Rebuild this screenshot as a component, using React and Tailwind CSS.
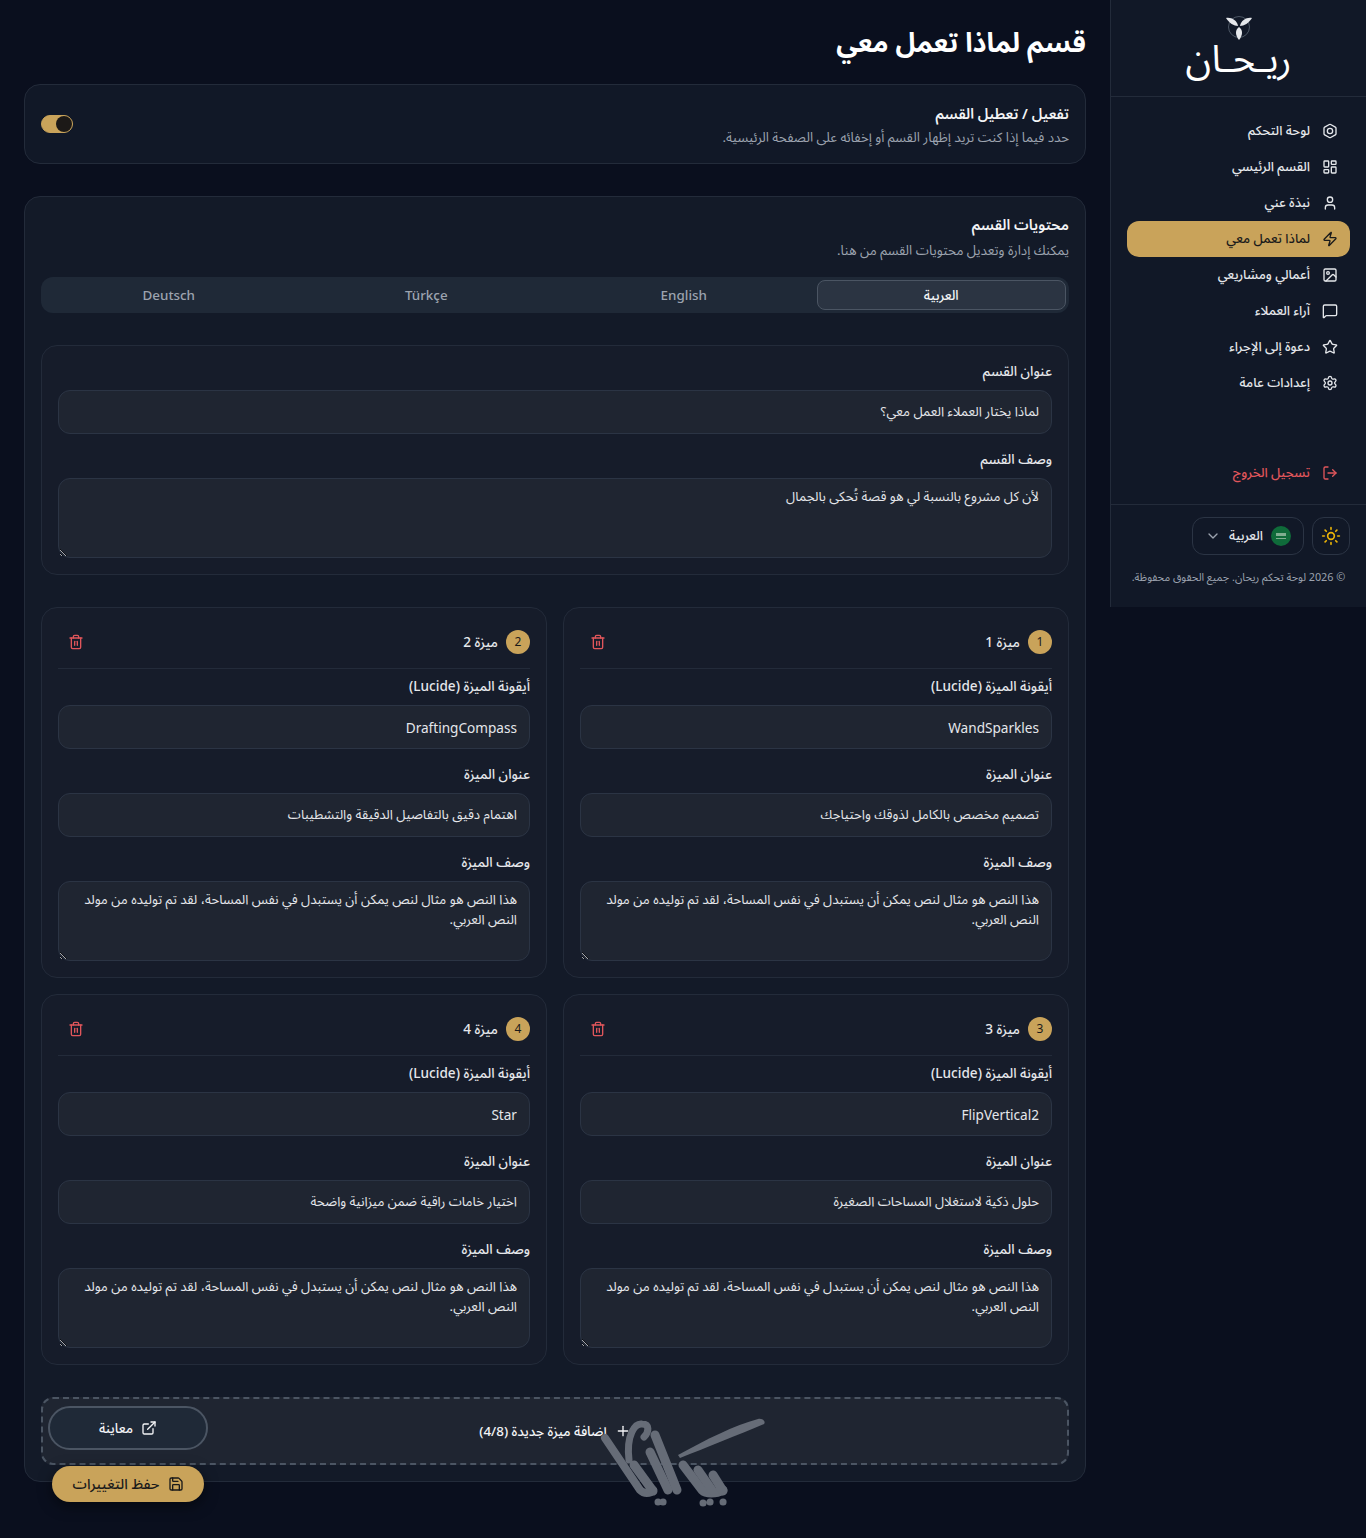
import { LayoutDashboard, User, Zap, Image, MessageSquare, Star, Settings, LogOut, Sun, ChevronDown, Trash2, Plus, ExternalLink, Save } from 'lucide-react';

const nav = [
  { label: 'لوحة التحكم', icon: 'hex' },
  { label: 'القسم الرئيسي', icon: LayoutDashboard },
  { label: 'نبذة عني', icon: User },
  { label: 'لماذا تعمل معي', icon: Zap, active: true },
  { label: 'أعمالي ومشاريعي', icon: Image },
  { label: 'آراء العملاء', icon: MessageSquare },
  { label: 'دعوة إلى الإجراء', icon: Star },
  { label: 'إعدادات عامة', icon: Settings },
];

const lorem = 'هذا النص هو مثال لنص يمكن أن يستبدل في نفس المساحة، لقد تم توليده من مولد النص العربي.';

const features = [
  { n: 1, icon: 'WandSparkles', title: 'تصميم مخصص بالكامل لذوقك واحتياجك' },
  { n: 2, icon: 'DraftingCompass', title: 'اهتمام دقيق بالتفاصيل الدقيقة والتشطيبات' },
  { n: 3, icon: 'FlipVertical2', title: 'حلول ذكية لاستغلال المساحات الصغيرة' },
  { n: 4, icon: 'Star', title: 'اختيار خامات راقية ضمن ميزانية واضحة' },
];

const HexIcon = ({ className }) => (
  <svg className={className} viewBox="0 0 24 24" fill="none" stroke="currentColor" strokeWidth="2" strokeLinecap="round" strokeLinejoin="round">
    <path d="M21 16V8a2 2 0 0 0-1-1.73l-7-4a2 2 0 0 0-2 0l-7 4A2 2 0 0 0 3 8v8a2 2 0 0 0 1 1.73l7 4a2 2 0 0 0 2 0l7-4A2 2 0 0 0 21 16z" />
    <circle cx="12" cy="12" r="4" />
  </svg>
);

const Logo = () => (
  <svg className="w-[28px] h-[26px]" viewBox="0 0 28 26" fill="none">
    <circle cx="14" cy="12" r="10.5" stroke="#4b5563" strokeWidth="1" />
    <path d="M13 11C9 11 4 8 1 3c5-1 11 2 12 8z" fill="#e5e7eb" />
    <path d="M15 11c4 0 9-3 12-8-5-1-11 2-12 8z" fill="#e5e7eb" />
    <path d="M14 12c-4 3-4 8 0 13 4-5 4-10 0-13z" fill="#e5e7eb" />
  </svg>
);

const Flag = () => (
  <div className="w-5 h-5 rounded-full bg-[#0f6b3a] flex flex-col items-center justify-center gap-[2px]">
    <div className="w-2.5 h-[3px] bg-[#7fae90]" />
    <div className="w-2.5 h-px bg-[#7fae90]" />
  </div>
);

const Label = ({ children }) => (
  <label className="block text-[13.6px] leading-[18px] font-medium text-[#e5e7eb] mb-[10px]">{children}</label>
);

const Field = ({ label, value, latin }) => (
  <div>
    <Label>{label}</Label>
    <input readOnly value={value} className={`block w-full h-11 px-[12px] rounded-xl border border-[#2b3444] bg-[#1f2531] text-[#e5e7eb] outline-none ${latin ? 'text-[13.6px]' : 'text-[13.2px]'}`} />
  </div>
);

const Area = ({ label, value }) => (
  <div>
    <Label>{label}</Label>
    <textarea readOnly value={value} className="block w-full h-20 px-[12px] py-[7px] rounded-xl border border-[#2b3444] bg-[#1f2531] text-[13.2px] leading-5 text-[#e5e7eb] outline-none" />
  </div>
);

const FeatureCard = ({ f }) => (
  <div className="rounded-2xl border border-[#232b3a] bg-[#161c2a] p-4 flex flex-col gap-4">
    <div>
      <div className="flex items-center justify-between h-9 mb-2">
        <div className="flex items-center gap-2">
          <div className="w-6 h-6 rounded-full bg-[#c9a35a] text-[#1a1a1a] text-xs flex items-center justify-center">{f.n}</div>
          <span className="text-[13.6px] font-medium text-[#e5e7eb]">ميزة {f.n}</span>
        </div>
        <div className="w-9 h-9 flex items-center justify-center">
          <Trash2 className="w-4 h-4 text-[#e0565b]" />
        </div>
      </div>
      <div className="border-t border-[#232b3a] pt-2">
        <Field label="أيقونة الميزة (Lucide)" value={f.icon} latin />
      </div>
    </div>
    <Field label="عنوان الميزة" value={f.title} />
    <Area label="وصف الميزة" value={lorem} />
  </div>
);

const App = () => {
  return (
    <div dir="rtl" className="min-h-[1538px] flex items-start bg-[#0a0f1e] text-[#e5e7eb] font-['Noto_Sans','Noto_Sans_Arabic','DejaVu_Sans',sans-serif]">
      {/* Sidebar */}
      <aside className="w-[256px] shrink-0 bg-[#111827] border-l border-[#232b3a]">
        <div className="h-[97px] border-b border-[#232b3a] flex flex-col items-center pt-[15px]">
          <Logo />
          <div className="text-[38px] leading-[32px] text-white">ريـحـان</div>
        </div>
        <nav className="px-4 pt-4">
          {nav.map((item) => (
            <div
              key={item.label}
              className={`h-9 px-3 flex items-center gap-3 rounded-xl text-[13px] font-medium ${item.active ? 'bg-[#c9a35a] text-[#1a1a1a]' : 'text-[#e5e7eb]'}`}
            >
              {item.icon === 'hex' ? <HexIcon className="w-4 h-4" /> : <item.icon className="w-4 h-4" />}
              <span>{item.label}</span>
            </div>
          ))}
        </nav>
        <div className="px-4 mt-[54px] mb-[13px]">
          <div className="h-9 px-3 flex items-center gap-3 text-[13px] font-medium text-[#e0565b]">
            <LogOut className="w-4 h-4" />
            <span>تسجيل الخروج</span>
          </div>
        </div>
        <div className="border-t border-[#232b3a] px-4 pt-3 pb-[22px]">
          <div className="flex gap-2">
            <div className="w-[38px] h-[38px] rounded-xl border border-[#2b3444] flex items-center justify-center">
              <Sun className="w-5 h-5 text-[#eab308]" />
            </div>
            <div className="w-[112px] h-[38px] rounded-xl border border-[#2b3444] flex items-center justify-center gap-2 text-[13px] font-medium">
              <Flag />
              <span>العربية</span>
              <ChevronDown className="w-4 h-4 text-[#9ca3af]" />
            </div>
          </div>
          <p className="mt-[14px] text-[10.8px] leading-4 text-[#9ca3af] text-center whitespace-nowrap">© 2026 لوحة تحكم ريحان. جميع الحقوق محفوظة.</p>
        </div>
      </aside>

      {/* Main */}
      <main className="relative flex-1 p-6">
        <h1 className="text-[27px] leading-9 font-bold text-white mb-6">قسم لماذا تعمل معي</h1>

        <section className="h-20 rounded-2xl border border-[#232b3a] bg-[#111827] px-4 flex items-center justify-between mb-8">
          <div>
            <div className="text-[14.6px] leading-[22px] font-semibold text-[#f3f4f6]">تفعيل / تعطيل القسم</div>
            <div className="text-[13.3px] leading-5 text-[#9ca3af] mt-[3px]">حدد فيما إذا كنت تريد إظهار القسم أو إخفائه على الصفحة الرئيسية.</div>
          </div>
          <div className="w-8 h-[18px] rounded-full bg-[#c9a35a] border border-[#c9a35a] flex justify-end items-center" dir="ltr">
            <div className="w-4 h-4 rounded-full bg-[#1c1917]" />
          </div>
        </section>

        <section className="rounded-2xl border border-[#232b3a] bg-[#131a28] p-4">
          <div className="text-[14.6px] leading-[22px] font-semibold text-[#f3f4f6]">محتويات القسم</div>
          <div className="text-[13.3px] leading-5 text-[#9ca3af] mt-[5px] mb-[17px]">يمكنك إدارة وتعديل محتويات القسم من هنا.</div>

          <div className="h-9 rounded-xl bg-[#1f2937] p-[3px] grid grid-cols-4 gap-2 mb-8">
            <div className="rounded-lg border border-[#4b5563] bg-[#2b3442] flex items-center justify-center text-[13.4px] font-medium text-[#f3f4f6]">العربية</div>
            <div className="flex items-center justify-center text-[13.4px] font-medium text-[#9ca3af]">English</div>
            <div className="flex items-center justify-center text-[13.4px] font-medium text-[#9ca3af]">Türkçe</div>
            <div className="flex items-center justify-center text-[13.4px] font-medium text-[#9ca3af]">Deutsch</div>
          </div>

          <div className="rounded-2xl border border-[#232b3a] bg-[#161c2a] p-4 flex flex-col gap-4 mb-8">
            <Field label="عنوان القسم" value="لماذا يختار العملاء العمل معي؟" />
            <Area label="وصف القسم" value="لأن كل مشروع بالنسبة لي هو قصة تُحكى بالجمال" />
          </div>

          <div className="grid grid-cols-2 gap-4 mb-8">
            {features.map((f) => <FeatureCard key={f.n} f={f} />)}
          </div>

          <div className="h-[68px] rounded-xl border-2 border-dashed border-[#4b5563] bg-[#1f2531] flex items-center justify-center gap-2 text-[13.4px] font-medium text-[#f3f4f6]">
            <Plus className="w-4 h-4" />
            <span>إضافة ميزة جديدة (4/8)</span>
          </div>
        </section>

        {/* Floating actions */}
        <div className="absolute left-[48px] top-[1406px] w-[160px] h-11 rounded-full border-2 border-[#4b5563] bg-[#1f2937] flex items-center justify-center gap-2 text-[13.4px] font-medium text-[#f3f4f6]">
          <ExternalLink className="w-4 h-4" />
          <span>معاينة</span>
        </div>
        <div className="absolute left-[52px] top-[1466px] w-[152px] h-9 rounded-full bg-[#c9a35a] shadow-[0_4px_14px_rgba(0,0,0,0.5)] flex items-center justify-center gap-2 text-[14.4px] font-medium text-[#1a1a1a]">
          <Save className="w-4 h-4" />
          <span>حفظ التغييرات</span>
        </div>

        {/* Watermark */}
        <svg className="absolute left-[590px] top-[1410px] w-[190px] h-[105px] pointer-events-none" viewBox="0 0 190 105" fill="none" stroke="#666c77" strokeWidth="9" strokeLinecap="round">
          <path d="M15 28L50 80C54 84 60 84 63 80" strokeWidth="8" />
          <path d="M39 50C36 25 45 13 52 14C60 14 59 22 54 27" strokeWidth="7" />
          <path d="M44 55L63 81" />
          <path d="M60 42L78 80" />
          <path d="M65 25L87 80" />
          <path d="M93 55L112 80C116 84 126 84 133 80" />
          <path d="M108 60L122 80" />
          <path d="M123 65L133 81" />
          <path d="M88 45C115 30 145 15 168 9C173 8 176 12 174 14C150 24 115 38 90 48z" fill="#666c77" stroke="none" />
          <path d="M68 92h.1M73 92h.1M113 93h.1M120 92h.1M133 92h.1" strokeWidth="7" />
        </svg>
      </main>
    </div>
  );
};

export default App;
